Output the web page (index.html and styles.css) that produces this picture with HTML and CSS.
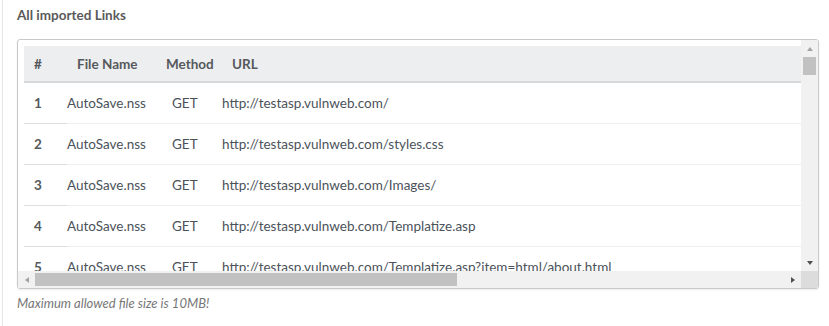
FILE: index.html
```html
<!DOCTYPE html>
<html>
<head>
<meta charset="utf-8">
<link rel="stylesheet" href="styles.css">
</head>
<body>
<div class="panel">
  <h4 class="panel-title">All imported Links</h4>
  <div class="scroll-box">
    <div class="viewport">
      <table class="links">
        <colgroup>
          <col class="c-num"><col class="c-file"><col class="c-method"><col class="c-url">
        </colgroup>
        <thead>
          <tr>
            <th class="h-num">#</th>
            <th class="h-file">File Name</th>
            <th class="h-method">Method</th>
            <th class="h-url">URL</th>
          </tr>
        </thead>
        <tbody>
          <tr><th class="d-num">1</th><td class="d-file">AutoSave.nss</td><td class="d-method">GET</td><td class="d-url">http://testasp.vulnweb.com/</td></tr>
          <tr><th class="d-num">2</th><td class="d-file">AutoSave.nss</td><td class="d-method">GET</td><td class="d-url">http://testasp.vulnweb.com/styles.css</td></tr>
          <tr><th class="d-num">3</th><td class="d-file">AutoSave.nss</td><td class="d-method">GET</td><td class="d-url">http://testasp.vulnweb.com/Images/</td></tr>
          <tr><th class="d-num">4</th><td class="d-file">AutoSave.nss</td><td class="d-method">GET</td><td class="d-url">http://testasp.vulnweb.com/Templatize.asp</td></tr>
          <tr><th class="d-num">5</th><td class="d-file">AutoSave.nss</td><td class="d-method">GET</td><td class="d-url">http://testasp.vulnweb.com/Templatize.asp?item=html/about.html</td></tr>
        </tbody>
      </table>
    </div>
    <div class="vbar">
      <div class="arrow arrow-up"></div>
      <div class="vtrack"><div class="vthumb"></div></div>
      <div class="arrow arrow-down"></div>
    </div>
    <div class="hbar">
      <div class="arrow arrow-left"></div>
      <div class="htrack"><div class="hthumb"></div></div>
      <div class="arrow arrow-right"></div>
    </div>
    <div class="corner"></div>
  </div>
  <p class="hint">Maximum allowed file size is 10MB!</p>
</div>
</body>
</html>
```
FILE: styles.css
```css
html, body {
  margin: 0;
  padding: 0;
  background: #fff;
}
body {
  font-family: "Lato", "Liberation Sans", sans-serif;
  color: #4b525a;
}
.panel {
  margin-left: 2px;
  border-left: 1px solid #e6e6e6;
  padding: 7px 10px 0 14px;
  height: 319px;
}
.panel-title {
  margin: 0 0 15px 0;
  font-size: 13.5px;
  font-weight: 700;
  color: #5a5a5a;
  line-height: 17px;
}
.scroll-box {
  width: 800px;
  height: 248px;
  border: 1px solid #c9c9c9;
  border-radius: 3px;
  box-shadow: 0 1px 2px rgba(0,0,0,0.08);
  display: grid;
  grid-template-columns: 1fr 17px;
  grid-template-rows: 1fr 17px;
  overflow: hidden;
}
.viewport {
  overflow: hidden;
  padding: 6px 0 0 6px;
  min-width: 0;
  min-height: 0;
}
.vbar {
  background: #f1f1f1;
  display: flex;
  flex-direction: column;
}
.hbar {
  background: #f1f1f1;
  display: flex;
}
.corner {
  background: #dcdcdc;
}
.arrow {
  flex: 0 0 17px;
  width: 17px;
  height: 17px;
  display: flex;
  align-items: center;
  justify-content: center;
}
.arrow::before {
  content: "";
  width: 0;
  height: 0;
  border-style: solid;
}
.arrow-up::before {
  border-width: 0 3.5px 4px 3.5px;
  border-color: transparent transparent #a3a3a3 transparent;
}
.arrow-down::before {
  border-width: 4px 3.5px 0 3.5px;
  border-color: #505050 transparent transparent transparent;
}
.arrow-left::before {
  border-width: 3.5px 4px 3.5px 0;
  border-color: transparent #a3a3a3 transparent transparent;
}
.arrow-right::before {
  border-width: 3.5px 0 3.5px 4px;
  border-color: transparent transparent transparent #505050;
}
.vtrack {
  flex: 1;
  padding: 0 2px;
}
.vthumb {
  height: 18px;
  background: #c1c1c1;
}
.htrack {
  flex: 1;
  padding: 2px 0;
}
.hthumb {
  width: 422px;
  height: 13px;
  background: #c1c1c1;
}
.links {
  border-collapse: collapse;
  table-layout: fixed;
  width: 1381px;
  font-size: 13.5px;
}
.c-num { width: 43px; }
.c-file { width: 90px; }
.c-method { width: 65px; }
.c-url { width: 1183px; }
.links thead th {
  background: #edeef0;
  height: 35px;
  padding: 0 0 0 10px;
  text-align: left;
  font-weight: 700;
  color: #55595c;
  border-bottom: 2px solid #d6d8da;
  white-space: nowrap;
}
.links thead th.h-method { padding-left: 9px; }
.links tbody tr {
  height: 41px;
}
.links tbody th, .links tbody td {
  padding: 0;
  text-align: left;
  white-space: nowrap;
  border-bottom: 1px solid #eceeef;
}
.links tbody th.d-num {
  padding-left: 10px;
  font-weight: 700;
  color: #55595c;
  border-bottom-color: #dcdfe2;
}
.links tbody td.d-method { padding-left: 15px; }
.hint {
  margin: 6px 0 0 0;
  font-size: 13px;
  line-height: 16px;
  font-style: italic;
  color: #777;
}
```
